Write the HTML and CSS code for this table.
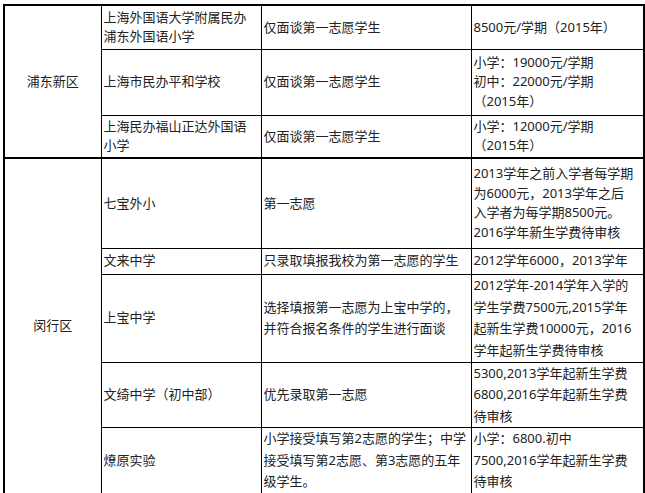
FILE: index.html
```html
<!DOCTYPE html>
<html lang="zh">
<head>
<meta charset="utf-8">
<title>学校招生</title>
<link rel="stylesheet" href="styles.css">
</head>
<body>
<table class="fees">
  <colgroup>
    <col class="c-area">
    <col class="c-school">
    <col class="c-rule">
    <col class="c-fee">
  </colgroup>
  <tbody>
    <tr class="r1">
      <td class="area" rowspan="3">浦东新区</td>
      <td>上海外国语大学附属民办<br>浦东外国语小学</td>
      <td>仅面谈第一志愿学生</td>
      <td>8500元/学期（2015年）</td>
    </tr>
    <tr class="r2">
      <td>上海市民办平和学校</td>
      <td>仅面谈第一志愿学生</td>
      <td>小学：19000元/学期<br>初中：22000元/学期<br>（2015年）</td>
    </tr>
    <tr class="r3">
      <td>上海民办福山正达外国语<br>小学</td>
      <td>仅面谈第一志愿学生</td>
      <td>小学：12000元/学期<br>（2015年）</td>
    </tr>
    <tr class="r4 section">
      <td class="area" rowspan="5">闵行区</td>
      <td>七宝外小</td>
      <td>第一志愿</td>
      <td>2013学年之前入学者每学期<br>为6000元，2013学年之后<br>入学者为每学期8500元。<br>2016学年新生学费待审核</td>
    </tr>
    <tr class="r5">
      <td>文来中学</td>
      <td>只录取填报我校为第一志愿的学生</td>
      <td>2012学年6000，2013学年</td>
    </tr>
    <tr class="r6 loose">
      <td>上宝中学</td>
      <td>选择填报第一志愿为上宝中学的，<br>并符合报名条件的学生进行面谈</td>
      <td>2012学年-2014学年入学的<br>学生学费7500元,2015学年<br>起新生学费10000元，2016<br>学年起新生学费待审核</td>
    </tr>
    <tr class="r7 loose">
      <td>文绮中学（初中部）</td>
      <td>优先录取第一志愿</td>
      <td>5300,2013学年起新生学费<br>6800,2016学年起新生学费<br>待审核</td>
    </tr>
    <tr class="r8 loose">
      <td>燎原实验</td>
      <td>小学接受填写第2志愿的学生；中学<br>接受填写第2志愿、第3志愿的五年<br>级学生。</td>
      <td>小学：6800.初中<br>7500,2016学年起新生学费<br>待审核</td>
    </tr>
  </tbody>
</table>
</body>
</html>
```
FILE: styles.css
```css
html, body {
  margin: 0;
  padding: 0;
  background: #fff;
}

body {
  padding: 4px 0 0 3px;
  font-family: "Noto Sans", "Noto Sans CJK SC", sans-serif;
  font-size: 13px;
  color: #222;
  text-spacing-trim: space-all;
}

.fees {
  border-collapse: collapse;
  table-layout: fixed;
  width: 640px;
  border: 2px solid #000;
}

.c-area { width: 97px; }
.c-school { width: 160px; }
.c-rule { width: 210px; }
.c-fee { width: 173px; }

.fees td {
  border: 1px solid #000;
  padding: 0 0 0 2px;
  vertical-align: middle;
  line-height: 19.5px;
  white-space: nowrap;
  overflow: hidden;
}

.fees td.area {
  text-align: center;
  padding: 0;
}

.fees tr.section td {
  border-top-width: 2px;
}

.fees tr.loose td {
  line-height: 21.5px;
}

.r1 { height: 44px; }
.r2 { height: 66px; }
.r3 { height: 43px; }
.r4 { height: 90px; }
.r5 { height: 26px; }
.r6 { height: 88px; }
.r7 { height: 65px; }
.r8 { height: 64px; }
```
